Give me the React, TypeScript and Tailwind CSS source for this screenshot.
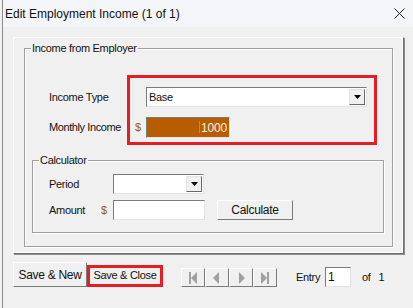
import React from 'react';

const font = { fontFamily: '"Liberation Sans", Arial, sans-serif' };

const Sunken: React.FC<{ className?: string; children?: React.ReactNode }> = ({ className = '', children }) => (
  <div
    className={`flex items-center border border-t-[#7a7a7a] border-l-[#7a7a7a] border-r-[#e3e3e3] border-b-[#e3e3e3] ${className}`}
  >
    {children}
  </div>
);

const Combo: React.FC<{ className?: string; value?: string }> = ({ className = '', value }) => (
  <Sunken className={`h-[20px] bg-white pl-[2px] pr-[1px] ${className}`}>
    <span className="flex-1 text-[11px] tracking-[-0.3px] text-[#111]">{value}</span>
    <div className="flex h-[16px] w-[16px] items-center justify-center border border-t-[#e3e3e3] border-l-[#e3e3e3] border-r-[#696969] border-b-[#696969] bg-[#f0f0f0]">
      <svg width="7" height="4" viewBox="0 0 7 4">
        <path d="M0 0h7L3.5 4z" fill="#000" />
      </svg>
    </div>
  </Sunken>
);

const Raised: React.FC<{ className?: string; children?: React.ReactNode }> = ({ className = '', children }) => (
  <div
    className={`flex items-center justify-center border border-t-white border-l-white border-r-[#7a7a7a] border-b-[#7a7a7a] bg-[#f0f0f0] text-[12px] text-[#111] ${className}`}
  >
    {children}
  </div>
);

const Group: React.FC<{ title: string; className?: string; children?: React.ReactNode }> = ({ title, className = '', children }) => (
  <div className={`relative border border-[#a0a0a0] shadow-[inset_1px_1px_0_#ffffff,1px_1px_0_#ffffff] ${className}`}>
    <span className="absolute -top-[8px] left-[6px] bg-[#f0f0f0] px-[1px] text-[11px] leading-[14px] tracking-[-0.3px] text-[#111]">
      {title}
    </span>
    {children}
  </div>
);

const NavBtn: React.FC<{ kind: 'first' | 'prev' | 'next' | 'last' }> = ({ kind }) => (
  <div className="flex h-[19px] w-[24px] items-center justify-center border border-t-white border-l-white border-r-[#7a7a7a] border-b-[#7a7a7a] bg-[#f0f0f0]">
    <svg width="10" height="12" viewBox="0 0 10 12">
      {kind === 'first' && (
        <>
          <rect x="1" y="0" width="2" height="12" fill="#a0a0a0" />
          <path d="M9 0v12L3 6z" fill="#a0a0a0" />
        </>
      )}
      {kind === 'prev' && <path d="M7 0v12L1 6z" fill="#a0a0a0" />}
      {kind === 'next' && <path d="M3 0v12L9 6z" fill="#a0a0a0" />}
      {kind === 'last' && (
        <>
          <path d="M1 0v12L7 6z" fill="#a0a0a0" />
          <rect x="7" y="0" width="2" height="12" fill="#a0a0a0" />
        </>
      )}
    </svg>
  </div>
);

export default function App() {
  return (
    <div className="h-[308px] w-[413px] overflow-hidden bg-[#f0f0f0]" style={font}>
      <div className="ml-[2px] flex h-full flex-col border-l border-[#8c8c8c]">
        {/* Title bar */}
        <div className="flex h-[27px] items-center justify-between bg-[#f3f5f8] pl-[2px] pr-[8px]">
          <span className="text-[12px] text-[#111]">Edit Employment Income (1 of 1)</span>
          <svg width="11" height="11" viewBox="0 0 11 11">
            <path d="M0.5 0.5l10 10M10.5 0.5l-10 10" stroke="#222" strokeWidth="1" />
          </svg>
        </div>

        {/* Outer panel */}
        <div className="ml-[10px] mt-[10px] h-[217px] w-[391px] border border-t-white border-l-white border-r-[#6e6e6e] border-b-[#6e6e6e] shadow-[inset_-1px_-1px_0_#ffffff,1px_1px_0_#8c8c8c]">
          <Group title="Income from Employer" className="ml-[10px] mt-[10px] h-[199px] w-[369px]">
            {/* highlight box */}
            <div className="absolute left-[102px] top-[26px] h-[70px] w-[250px] border-[3px] border-[#e31e24]" />

            <div className="flex flex-col pl-[24px] pt-[38px]">
              <div className="flex h-[20px] items-center">
                <span className="w-[97px] text-[11px] tracking-[-0.3px] text-[#111]">Income Type</span>
                <Combo className="w-[221px]" value="Base" />
              </div>
              <div className="mt-[10px] flex h-[21px] items-center">
                <span className="w-[86px] text-[11px] tracking-[-0.4px] text-[#111]">Monthly Income</span>
                <span className="w-[11px] text-[11px] text-[#9c5800]">$</span>
                <Sunken className="h-[21px] w-[84px] bg-[#b85c00] pr-[2px]">
                  <span className="flex-1 text-right text-[12px] tracking-[-0.2px] text-[#fff4e0]">
                    <span className="mr-[1px] inline-block h-[12px] w-[1px] translate-y-[1px] bg-[#7a8fd8]" />
                    1000
                  </span>
                </Sunken>
              </div>
            </div>

            <Group title="Calculator" className="ml-[7px] mt-[22px] h-[73px] w-[352px]">
              <div className="flex flex-col pl-[16px] pt-[13px]">
                <div className="flex h-[20px] items-center">
                  <span className="w-[64px] text-[11px] tracking-[-0.3px] text-[#111]">Period</span>
                  <Combo className="w-[91px]" />
                </div>
                <div className="mt-[6px] flex h-[20px] items-center">
                  <span className="w-[52px] text-[11px] tracking-[-0.3px] text-[#111]">Amount</span>
                  <span className="w-[12px] text-[11px] text-[#9c5800]">$</span>
                  <Sunken className="h-[20px] w-[92px] bg-white" />
                  <Raised className="ml-[12px] h-[20px] w-[76px] text-[11px] tracking-[-0.3px]">Calculate</Raised>
                </div>
              </div>
            </Group>
          </Group>
        </div>

        {/* Bottom bar */}
        <div className="ml-[10px] mt-[8px] flex h-[25px] items-end text-[11px] tracking-[-0.3px] text-[#111]">
          <Raised className="h-[25px] w-[74px] text-[11px]">Save &amp; New</Raised>
          <div className="flex h-[22px] w-[76px] items-center justify-center border-[3px] border-[#e31e24] pb-[1px] text-[11px]">
            Save &amp; Close
          </div>
          <div className="ml-[18px] flex">
            <NavBtn kind="first" />
            <NavBtn kind="prev" />
            <NavBtn kind="next" />
            <NavBtn kind="last" />
          </div>
          <div className="ml-[19px] flex h-[20px] items-center">
            <span className="w-[29px]">Entry</span>
            <Sunken className="h-[20px] w-[26px] bg-white pl-[2px]">
              <span className="text-[12px]">1</span>
            </Sunken>
            <span className="ml-[11px]">of</span>
            <span className="ml-[8px]">1</span>
          </div>
        </div>
      </div>
    </div>
  );
}
